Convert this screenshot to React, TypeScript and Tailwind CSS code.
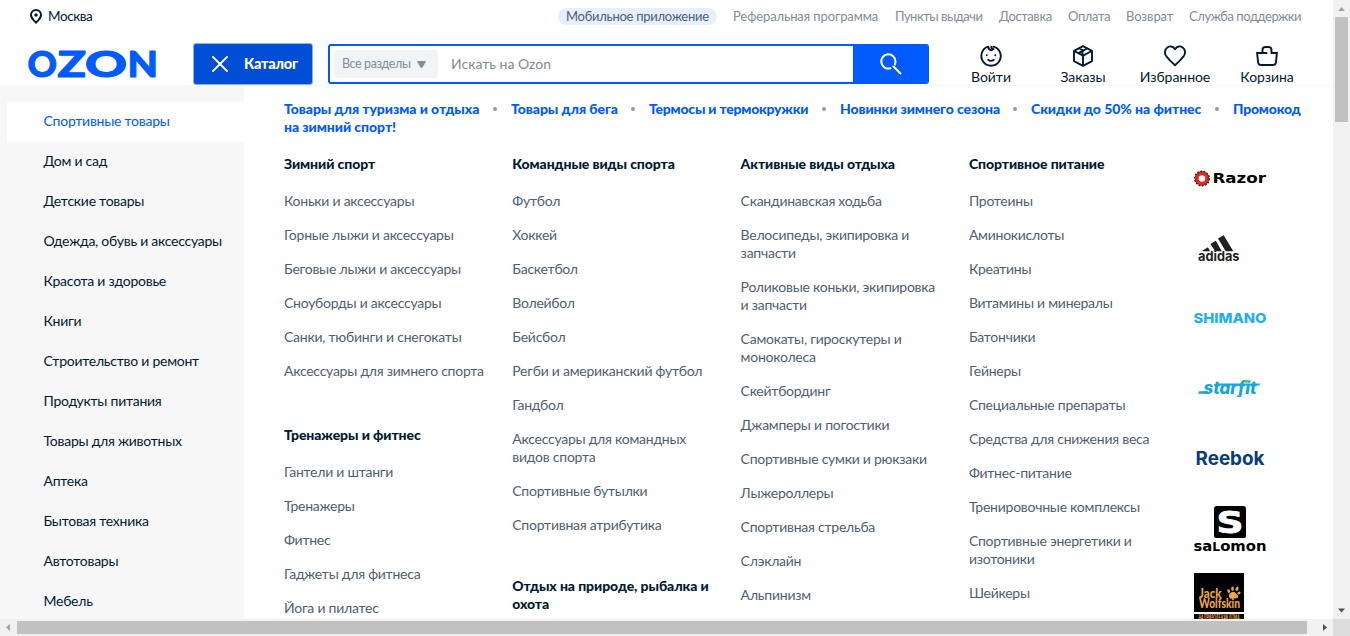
import React from "react";

const categories = [
  "Спортивные товары",
  "Дом и сад",
  "Детские товары",
  "Одежда, обувь и аксессуары",
  "Красота и здоровье",
  "Книги",
  "Строительство и ремонт",
  "Продукты питания",
  "Товары для животных",
  "Аптека",
  "Бытовая техника",
  "Автотовары",
  "Мебель",
];

type Section = { title: string; items: string[] };

const columns: { gap: string; sections: Section[] }[] = [
  {
    gap: "gap-[46px]",
    sections: [
      {
        title: "Зимний спорт",
        items: [
          "Коньки и аксессуары",
          "Горные лыжи и аксессуары",
          "Беговые лыжи и аксессуары",
          "Сноуборды и аксессуары",
          "Санки, тюбинги и снегокаты",
          "Аксессуары для зимнего спорта",
        ],
      },
      {
        title: "Тренажеры и фитнес",
        items: ["Гантели и штанги", "Тренажеры", "Фитнес", "Гаджеты для фитнеса", "Йога и пилатес"],
      },
    ],
  },
  {
    gap: "gap-[43px]",
    sections: [
      {
        title: "Командные виды спорта",
        items: [
          "Футбол",
          "Хоккей",
          "Баскетбол",
          "Волейбол",
          "Бейсбол",
          "Регби и американский футбол",
          "Гандбол",
          "Аксессуары для командных\nвидов спорта",
          "Спортивные бутылки",
          "Спортивная атрибутика",
        ],
      },
      { title: "Отдых на природе, рыбалка и\nохота", items: [] },
    ],
  },
  {
    gap: "gap-[46px]",
    sections: [
      {
        title: "Активные виды отдыха",
        items: [
          "Скандинавская ходьба",
          "Велосипеды, экипировка и\nзапчасти",
          "Роликовые коньки, экипировка\nи запчасти",
          "Самокаты, гироскутеры и\nмоноколеса",
          "Скейтбординг",
          "Джамперы и погостики",
          "Спортивные сумки и рюкзаки",
          "Лыжероллеры",
          "Спортивная стрельба",
          "Слэклайн",
          "Альпинизм",
        ],
      },
    ],
  },
  {
    gap: "gap-[46px]",
    sections: [
      {
        title: "Спортивное питание",
        items: [
          "Протеины",
          "Аминокислоты",
          "Креатины",
          "Витамины и минералы",
          "Батончики",
          "Гейнеры",
          "Специальные препараты",
          "Средства для снижения веса",
          "Фитнес-питание",
          "Тренировочные комплексы",
          "Спортивные энергетики и\nизотоники",
          "Шейкеры",
        ],
      },
    ],
  },
];

const topLinks = [
  { label: "Мобильное приложение", cls: "w-[143px] tracking-[-0.28px]" },
  { label: "Реферальная программа", cls: "w-[146px] tracking-[-0.1px]" },
  { label: "Пункты выдачи", cls: "w-[88px] tracking-[-0.5px]" },
  { label: "Доставка", cls: "w-[53px] tracking-[-0.4px]" },
  { label: "Оплата", cls: "w-[42px] tracking-[-0.4px]" },
  { label: "Возврат", cls: "w-[47px] tracking-[-0.1px]" },
  { label: "Служба поддержки", cls: "w-[113px] tracking-[-0.45px]" },
];

const promos = [
  { label: "Товары для туризма и отдыха\nна зимний спорт!", cls: "w-[227px]" },
  { label: "Товары для бега", cls: "w-[138px]" },
  { label: "Термосы и термокружки", cls: "w-[191px] tracking-[-0.22px]" },
  { label: "Новинки зимнего сезона", cls: "w-[191px] tracking-[-0.1px]" },
  { label: "Скидки до 50% на фитнес", cls: "w-[202px]" },
  { label: "Промокод", cls: "w-[70px] tracking-[-0.2px]" },
];

function OzonLogo() {
  return (
    <svg
      className="h-[30px] w-[130px] shrink-0 overflow-visible"
      viewBox="0 0 130 30"
      fill="#005bff"
      fontFamily="Lato"
      fontWeight="900"
      fontSize="36"
      stroke="#005bff"
      strokeWidth="1"
      strokeLinejoin="round"
    >
      <text x="-0.5" y="28" textLength="29.5" lengthAdjust="spacingAndGlyphs">O</text>
      <text x="29.500" y="28" textLength="28.5" lengthAdjust="spacingAndGlyphs">Z</text>
      <text x="57" y="28" textLength="42" lengthAdjust="spacingAndGlyphs">O</text>
      <text x="99.5" y="28" textLength="30.5" lengthAdjust="spacingAndGlyphs">N</text>
    </svg>
  );
}

const iconCls = "h-6 w-6 shrink-0";
const iconProps = {
  viewBox: "0 0 24 24",
  fill: "none",
  stroke: "#001a34",
  strokeWidth: 1.9,
  strokeLinejoin: "round" as const,
  strokeLinecap: "round" as const,
};

function FaceIcon() {
  return (
    <svg className={iconCls} {...iconProps}>
      <path d="M14.500 2.600A9.700 9.700 0 1 1 9.200 2.700c.2 2.300 1.300 3.500 3.600 3.600M12.300 2.600c.1 1.400.8 2.300 2.300 2.500" />
      <path d="M9.200 15.800c1.500 1.300 4.100 1.300 5.600 0" />
      <path d="M7.800 11.200v.1M16.200 11.200v.1" />
    </svg>
  );
}

function BoxIcon() {
  return (
    <svg className={iconCls} {...iconProps}>
      <path d="M12 2.200l9 4.600v10.300L12 21.800l-9-4.700V6.800zM3.200 7L12 11.700l8.800-4.700M12 12v9.500M7.300 9.200L16.200 4.500M8.500 4.500l3 1.500M11.500 10.800v-3.300" />
    </svg>
  );
}

function HeartIcon() {
  return (
    <svg className={iconCls} {...iconProps}>
      <path d="M12 5.300C10 1.900 6.500 1.800 4.300 3.500C1.400 5.800 1.300 9.500 3.200 12C5.300 14.900 8.800 18.300 12 21.200C15.200 18.300 18.700 14.900 20.800 12C22.700 9.500 22.600 5.800 19.700 3.500C17.500 1.800 14 1.900 12 5.300z" />
    </svg>
  );
}

function BasketIcon() {
  return (
    <svg className={iconCls} {...iconProps} strokeLinejoin="miter" strokeLinecap="butt">
      <path d="M12.300 9H2.100l1 9.700c.2 1.500 1.100 2.300 2.700 2.300h12.400c1.600 0 2.500-.8 2.700-2.300l1-9.700h-5.400V6.200c0-2.200-1-3.200-3-3.200h-3c-2 0-3 1-3 3.200V9" />
    </svg>
  );
}

const actions = [
  { label: "Войти", icon: <FaceIcon /> },
  { label: "Заказы", icon: <BoxIcon /> },
  { label: "Избранное", icon: <HeartIcon /> },
  { label: "Корзина", icon: <BasketIcon /> },
];

function Header() {
  return (
    <header className="flex h-[86px] shrink-0 flex-col border-b border-[#f7f7f7] bg-white">
      <div className="flex h-8 shrink-0 items-center justify-between pr-[31px] pl-[30px]">
        <div className="flex items-center gap-1.5 text-[13.5px] leading-[18px] tracking-[-0.4px] text-[#001a34]">
          <svg className="h-[15px] w-3" viewBox="0 0 12 15" fill="none" stroke="#001a34" strokeWidth="2">
            <path d="M6 13.600C3.500 11.200 1 8.900 1 6a5 5 0 0 1 10 0c0 2.900-2.500 5.200-5 7.600z" />
            <circle cx="6" cy="6" r="1.700" fill="#001a34" stroke="none" />
          </svg>
          Москва
        </div>
        <nav className="flex items-center gap-4 text-[13px] leading-[17px] text-[#808d9a]">
          {topLinks.map((l, i) => (
            <a key={l.label} className={i === 0 ? "rounded-full bg-[#e5efff] px-2 text-[#4d5f71]" : ""}>
              <span className={`block whitespace-nowrap ${l.cls}`}>{l.label}</span>
            </a>
          ))}
        </nav>
      </div>
      <div className="flex h-[53px] pl-7">
        <div className="pt-[17px]">
          <OzonLogo />
        </div>
        <button className="mt-[11px] ml-[35px] flex h-[42px] w-[120px] items-center rounded-[3px] border border-[#8ab4fa] bg-[#004ed6] pl-[18px] text-[14.5px] font-black tracking-[-0.25px] text-white">
          <svg className="h-4 w-4" viewBox="0 0 16 16" stroke="#fff" strokeWidth="1.8" strokeLinecap="round">
            <path d="M1 1l14 14M15 1L1 15" />
          </svg>
          <span className="-mt-px ml-4">Каталог</span>
        </button>
        <div className="mt-3 ml-[15px] flex h-10 w-[601px] overflow-hidden rounded-[3px] border-2 border-[#005bff] bg-white">
          <div className="mt-1 ml-1 flex h-7 w-[104px] items-center rounded-sm bg-[#f2f3f5] pl-2 text-[12.5px] tracking-[-0.4px] text-[#808d9a]">
            <span className="w-[75px] whitespace-nowrap">Все разделы</span>
            <svg className="h-[7px] w-[9px]" viewBox="0 0 9 7" fill="#808d9a">
              <path d="M1 0h7q1 0 .7 1L5.600 6.300q-1.100 1.200-2.200 0L.3 1Q0 0 1 0z" />
            </svg>
          </div>
          <div className="ml-[13px] flex flex-1 items-center text-sm text-[#808d9a]">Искать на Ozon</div>
          <div className="flex w-[74px] items-center justify-center bg-[#005bff] pl-0.5">
            <svg className="h-6 w-6" viewBox="0 0 24 24" fill="none" stroke="#fff" strokeWidth="2" strokeLinecap="round">
              <path d="M14.500 14.500L21.500 21.500M11.500 16.200A7.100 7.100 0 1 1 16.500 9.500a7 7 0 0 1-.7 3" />
            </svg>
          </div>
        </div>
        <nav className="ml-[16px] flex pt-[12px] text-sm leading-[18px] tracking-[-0.05px] text-[#001a34]">
          {actions.map((a) => (
            <a key={a.label} className="flex w-[92px] flex-col items-center">
              {a.icon}
              <span>{a.label}</span>
            </a>
          ))}
        </nav>
      </div>
    </header>
  );
}

function Sidebar() {
  return (
    <aside className="w-[244px] shrink-0 overflow-hidden bg-[#f7f7f7] pt-4 pl-[7px]">
      {categories.map((c, i) => (
        <div
          key={c}
          className={`flex h-10 items-center pb-0.5 pl-[36.5px] text-sm tracking-[-0.25px] whitespace-nowrap ${i === 0 ? "bg-white text-[#005bff]" : "text-[#001a34]"}`}
        >
          {c}
        </div>
      ))}
    </aside>
  );
}

function Promos() {
  return (
    <div className="flex pl-10 text-sm leading-[18px] font-black tracking-[-0.05px] text-[#005bff]">
      {promos.map((p, i) => (
        <div key={p.label} className={`flex shrink-0 justify-between whitespace-pre ${p.cls}`}>
          <span>{p.label}</span>
          {i < promos.length - 1 && <span className="mt-[7px] mr-[14px] h-1 w-1 rounded-full bg-[#999]" />}
        </div>
      ))}
    </div>
  );
}

function Brands() {
  return (
    <div className="flex w-[90px] shrink-0 flex-col pl-[21px]">
      <svg className="mt-[14px] h-[18px] w-[75px]" viewBox="0 0 75 18">
        <circle cx="8" cy="8.500" r="7.200" fill="#222" stroke="#222" strokeWidth="1.600" strokeDasharray="1.800 1.400" />
        <circle cx="8" cy="8.500" r="5" fill="#fff" stroke="#e8281f" strokeWidth="3.400" />
        <text x="18.500" y="13.200" fontFamily="DejaVu Sans" fontWeight="700" fontSize="14.500" textLength="53.500" lengthAdjust="spacingAndGlyphs">Razor</text>
      </svg>
      <svg className="mt-[46px] ml-1 h-[30px] w-[44px]" viewBox="0 0 44 30" fill="#231f20">
        <path d="M4.500 16.500l5.500-3.200 2 3.900H5zM12.500 10l5.300-3.200 6 10.400h-6.700zM20 4.600L25.700 1.200l9.600 16h-7.600z" />
        <text x="0" y="27" fontFamily="Inter" fontWeight="700" fontSize="13" textLength="41.500" lengthAdjust="spacingAndGlyphs">adidas</text>
      </svg>
      <svg className="mt-[47px] h-4 w-[74px]" viewBox="0 0 74 16" fill="#1fb0ee">
        <text x="-0.500" y="12" fontFamily="Inter" fontWeight="800" fontSize="13.500" textLength="73" lengthAdjust="spacingAndGlyphs">SHIMANO</text>
      </svg>
      <svg className="mt-[52px] ml-1 h-[18px] w-[66px]" viewBox="0 0 66 18" fill="#16a5dc">
        <path d="M1 12.300h9v2.500H0zM18 4.500h44l-.5 2H17.500z" />
        <text x="5.500" y="14.500" fontFamily="Inter" fontStyle="italic" fontWeight="800" fontSize="17" textLength="53" lengthAdjust="spacingAndGlyphs">starfit</text>
        <circle cx="48.500" cy="2.200" r="1.800" fill="#7ac143" />
      </svg>
      <svg className="mt-[53px] ml-0.5 h-[18px] w-[72px] overflow-visible" viewBox="0 0 72 18" fill="#063d7b">
        <text x="-0.500" y="15.200" fontFamily="Inter" fontWeight="700" fontSize="19" textLength="69" lengthAdjust="spacingAndGlyphs">Reebok</text>
      </svg>
      <svg className="mt-[38px] h-[47px] w-[74px] overflow-visible" viewBox="0 0 74 47" fill="#000">
        <rect x="20" y="0" width="32" height="32" rx="2.500" />
        <text x="22.500" y="27" fill="#fff" stroke="#fff" strokeWidth="0.800" fontFamily="DejaVu Sans" fontWeight="700" fontSize="30" textLength="27" lengthAdjust="spacingAndGlyphs">S</text>
        <text x="-0.500" y="44.800" fontFamily="DejaVu Sans" fontWeight="700" fontSize="14.500" textLength="73" lengthAdjust="spacingAndGlyphs">
          sa<tspan fontSize="12">L</tspan>omon
        </text>
      </svg>
      <svg className="mt-5 h-[47px] w-[50px] shrink-0" viewBox="0 0 50 47" fill="#e9a845">
        <path fill="#000" d="M0 0h50v47H0z" />
        <path fill="#fff" d="M0 39h50v2H0z" />
        <text x="5" y="24.500" fontFamily="Lato" fontWeight="900" fontSize="13" textLength="22.500" lengthAdjust="spacingAndGlyphs">Jack</text>
        <text x="5" y="34.800" fontFamily="Lato" fontWeight="900" fontSize="13" textLength="41" lengthAdjust="spacingAndGlyphs">Wolfskin</text>
        <path d="M35.500 20.500q4-3 6-.5l2.500 2.500q1 2.500-2 2.700l-5 .5q-3-1-1.500-5.200z" />
        <ellipse cx="34.700" cy="18" rx="1.300" ry="1.900" transform="rotate(-30 34.700 18)" />
        <ellipse cx="38.500" cy="15.800" rx="1.300" ry="2.200" />
        <ellipse cx="43" cy="15.800" rx="1.400" ry="2.200" transform="rotate(25 43 15.800)" />
        <ellipse cx="45" cy="20" rx="1.300" ry="1.800" transform="rotate(50 45 20)" />
        <text x="4.500" y="47" fontFamily="Lato" fontStyle="italic" fontWeight="900" fontSize="6.500" textLength="41" lengthAdjust="spacingAndGlyphs">НА ПРИРОДЕ КАК ДОМА</text>
      </svg>
    </div>
  );
}

function Menu() {
  return (
    <div className="flex pl-10">
      {columns.map((col, ci) => (
        <div key={ci} className={`flex w-[228.300px] shrink-0 flex-col pt-[19px] text-sm leading-[18px] whitespace-pre ${col.gap}`}>
          {col.sections.map((s) => (
            <section key={s.title}>
              <h3 className="mb-[19px] font-black tracking-[-0.08px] text-[#001a34]">{s.title}</h3>
              <ul className="flex flex-col gap-4 tracking-[-0.25px] text-[#4d6172]">
                {s.items.map((it) => (
                  <li key={it}>{it}</li>
                ))}
              </ul>
            </section>
          ))}
        </div>
      ))}
    </div>
  );
}

function ArrowGlyph({ d, fill }: { d: string; fill: string }) {
  return (
    <svg className="h-[17px] w-[17px] shrink-0" viewBox="0 0 17 17" fill={fill}>
      <path d={d} />
    </svg>
  );
}

export default function App() {
  return (
    <div className="flex h-[636px] w-[1350px] flex-col overflow-hidden bg-white font-['Lato','Noto_Sans',sans-serif]">
      <div className="flex h-[619px]">
        <div className="flex w-[1333px] flex-col overflow-hidden">
          <Header />
          <div className="flex min-h-0 flex-1">
            <Sidebar />
            <main className="min-w-0 flex-1 overflow-hidden pt-[14px]">
              <Promos />
              <div className="flex">
                <div className="w-[929px] shrink-0">
                  <Menu />
                </div>
                <div className="pt-[20px]">
                  <Brands />
                </div>
              </div>
            </main>
          </div>
        </div>
        <div className="flex w-[17px] flex-col items-center justify-between bg-[#f1f1f1]">
          <div>
            <ArrowGlyph fill="#a3a3a3" d="M5 11l3.500-4 3.500 4z" />
            <div className="mx-auto h-[105px] w-[13px] bg-[#c1c1c1]" />
          </div>
          <ArrowGlyph fill="#505050" d="M5 6.500h7L8.500 10.500z" />
        </div>
      </div>
      <div className="flex h-[17px] items-center bg-[#f1f1f1]">
        <ArrowGlyph fill="#a3a3a3" d="M10 5v7l-4-3.500z" />
        <div className="h-[13px] w-[1290px] bg-[#c1c1c1]" />
        <div className="flex w-[26px] justify-end">
          <ArrowGlyph fill="#505050" d="M7 5v7l4-3.500z" />
        </div>
        <div className="h-[17px] w-[17px] bg-[#dcdcdc]" />
      </div>
    </div>
  );
}
